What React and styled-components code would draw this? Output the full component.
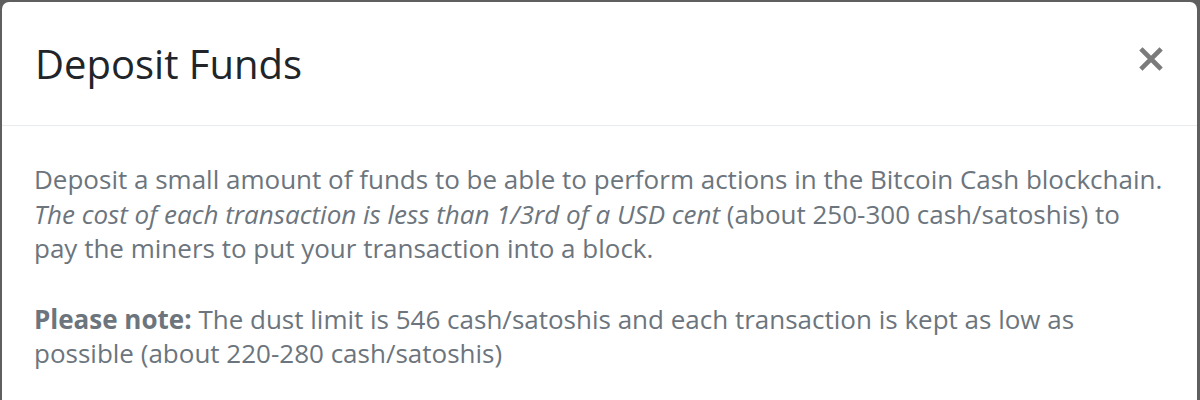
import React from 'react';
import styled, { createGlobalStyle } from 'styled-components';

const GlobalStyle = createGlobalStyle`
  html, body {
    margin: 0;
    padding: 0;
    background: #5f5f5f;
  }
  body {
    font-family: 'Open Sans', 'Noto Sans', sans-serif;
  }
`;

const Backdrop = styled.div`
  width: 1200px;
  height: 400px;
  box-sizing: border-box;
  padding: 2px 3px 0 2px;
  background: #5f5f5f;
  overflow: hidden;
`;

const Modal = styled.div`
  background: #fff;
  border-radius: 7px 7px 0 0;
  height: 100%;
`;

const Header = styled.div`
  display: flex;
  align-items: center;
  justify-content: space-between;
  height: 124px;
  box-sizing: border-box;
  padding: 0 34px 0 33px;
  border-bottom: 1px solid #e9ecef;
`;

const Title = styled.h5`
  margin: 0;
  font-size: 40px;
  font-weight: 400;
  color: #212529;
  line-height: 1.2;
`;

const CloseButton = styled.button`
  border: 0;
  background: none;
  padding: 0;
  margin-bottom: 10px;
  display: flex;
  cursor: pointer;
`;

const Body = styled.div`
  padding: 36px 29px 36px 32px;
`;

const Text = styled.p`
  margin: 0 0 36px;
  font-size: 26px;
  line-height: 34.5px;
  color: #6c757d;

  em {
    font-style: italic;
  }
  strong {
    font-weight: 700;
  }
`;

export default function App() {
  return (
    <Backdrop>
      <GlobalStyle />
      <Modal>
        <Header>
          <Title>Deposit Funds</Title>
          <CloseButton aria-label="Close">
            <svg width="24" height="24" viewBox="0 0 24 24">
              <path
                d="M3.5 3.5 L20.5 20.5 M20.5 3.5 L3.5 20.5"
                stroke="#7b7b7b"
                strokeWidth="4.6"
                strokeLinecap="square"
              />
            </svg>
          </CloseButton>
        </Header>
        <Body>
          <Text>
            Deposit a small amount of funds to be able to perform actions in the Bitcoin Cash
            blockchain. <em>The cost of each transaction is less than 1/3rd of a USD cent</em>{' '}
            (about 250-300 cash/satoshis) to pay the miners to put your transaction into a block.
          </Text>
          <Text>
            <strong>Please note:</strong> The dust limit is 546 cash/satoshis and each
            transaction is kept as low as possible (about 220-280 cash/satoshis)
          </Text>
        </Body>
      </Modal>
    </Backdrop>
  );
}
